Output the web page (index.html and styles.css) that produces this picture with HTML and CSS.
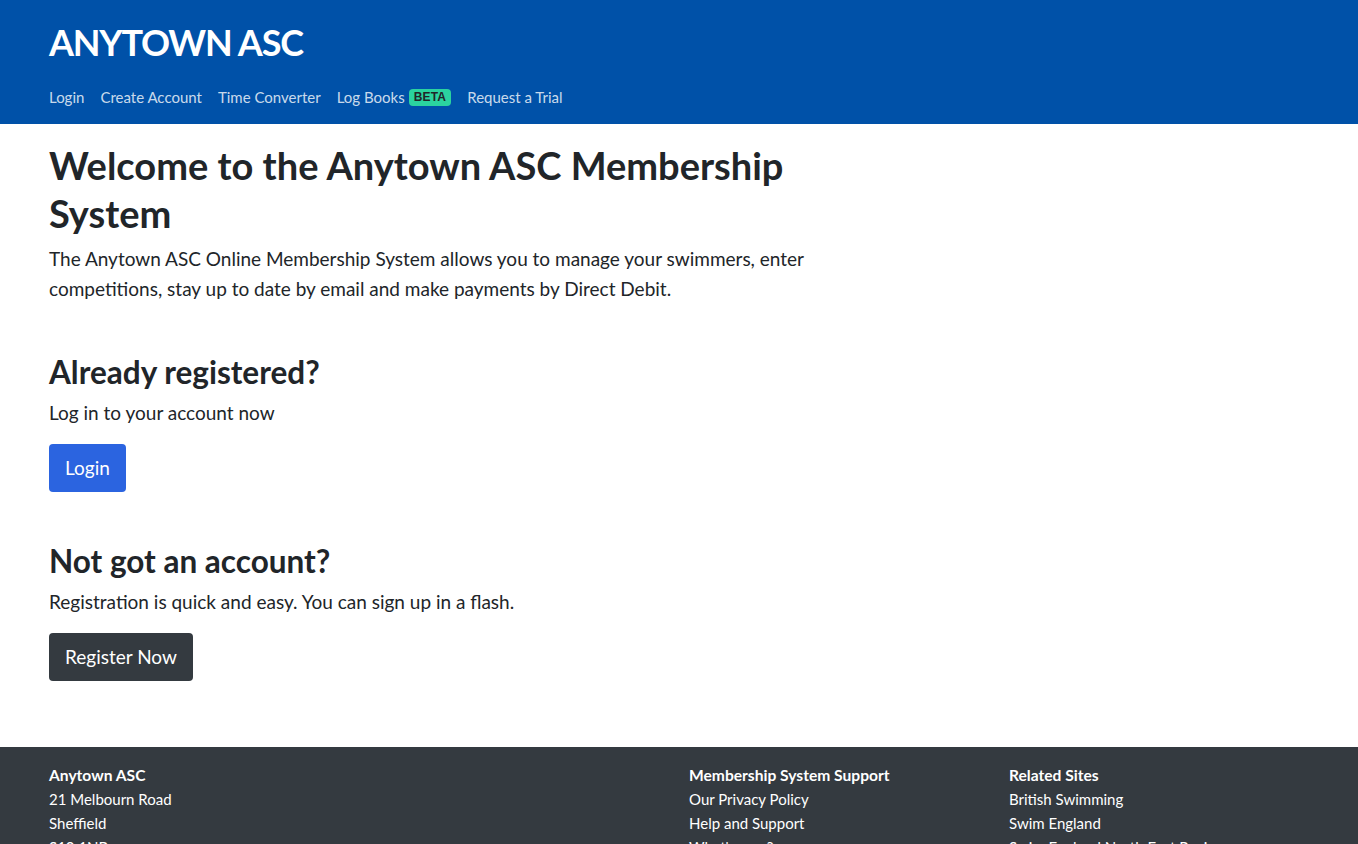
FILE: index.html
```
<!DOCTYPE html>
<html lang="en">
<head>
<meta charset="utf-8">
<title>Anytown ASC Membership</title>
<link rel="stylesheet" href="styles.css">
</head>
<body>
<header class="site-header">
  <div class="container">
    <div class="brand">ANYTOWN ASC</div>
    <nav class="nav">
      <a href="#">Login</a>
      <a href="#">Create Account</a>
      <a href="#">Time Converter</a>
      <a href="#">Log Books <span class="badge">BETA</span></a>
      <a href="#">Request a Trial</a>
    </nav>
  </div>
</header>
<main class="container main">
  <div class="intro">
    <h1>Welcome to the Anytown ASC Membership System</h1>
    <p class="lead">The Anytown ASC Online Membership System allows you to manage your swimmers, enter competitions, stay up to date by email and make payments by Direct Debit.</p>
  </div>
  <section class="block">
    <h2>Already registered?</h2>
    <p class="lead">Log in to your account now</p>
    <a class="btn btn-primary" href="#">Login</a>
  </section>
  <section class="block block-2">
    <h2>Not got an account?</h2>
    <p class="lead">Registration is quick and easy. You can sign up in a flash.</p>
    <a class="btn btn-dark" href="#">Register Now</a>
  </section>
</main>
<footer class="site-footer">
  <div class="container footer-grid">
    <div class="fcol">
      <div class="fhead">Anytown ASC</div>
      <div>21 Melbourn Road</div>
      <div>Sheffield</div>
      <div>S10 1NB</div>
    </div>
    <div class="fcol"></div>
    <div class="fcol">
      <div class="fhead">Membership System Support</div>
      <a href="#">Our Privacy Policy</a>
      <a href="#">Help and Support</a>
      <a href="#">What's new?</a>
    </div>
    <div class="fcol">
      <div class="fhead">Related Sites</div>
      <a href="#">British Swimming</a>
      <a href="#">Swim England</a>
      <a href="#">Swim England North East Region</a>
    </div>
  </div>
</footer>
</body>
</html>
```
FILE: styles.css
```
* { box-sizing: border-box; }
html, body { margin: 0; padding: 0; }
body {
  font-family: Lato, "Noto Sans", sans-serif;
  color: #212529;
  background: #fff;
  font-size: 16px;
  line-height: 1.5;
}
a { text-decoration: none; }
.container {
  padding-left: 49px;
  padding-right: 49px;
}
.site-header {
  background: #0051a8;
  padding-top: 18px;
  padding-bottom: 7px;
}
.brand {
  color: #fff;
  font-weight: 700;
  font-size: 36px;
  letter-spacing: -1.2px;
  line-height: 48px;
}
.nav {
  display: flex;
  gap: 16px;
  margin-top: 11px;
  padding: 8px 0;
}
.nav a {
  color: rgba(255,255,255,0.8);
  font-size: 15px;
  line-height: 24px;
  display: flex;
  align-items: center;
  gap: 4px;
}
.badge {
  background: #2bd39f;
  color: #212529;
  font-family: "Liberation Sans", Arial, sans-serif;
  font-weight: 700;
  font-size: 12px;
  line-height: 17px;
  padding: 0 5px;
  border-radius: 4px;
  letter-spacing: 0.2px;
}
.main { padding-top: 17px; padding-bottom: 66px; }
.intro { max-width: 860px; }
h1 {
  font-size: 38px;
  line-height: 48px;
  font-weight: 700;
  margin: 0 0 7px;
}
h2 {
  font-size: 31.5px;
  line-height: 38px;
  font-weight: 700;
  margin: 0 0 7px;
}
.lead {
  font-size: 19px;
  line-height: 30px;
  margin: 0 0 16px;
}
.intro .lead { margin-bottom: 0; }
.block { margin-top: 49px; }
.block-2 { margin-top: 50px; }
.btn {
  display: inline-block;
  font-size: 19px;
  line-height: 30px;
  padding: 9px 16px;
  border-radius: 4px;
  color: #fff;
}
.btn-primary { background: #2b64e0; }
.btn-dark { background: #343a40; }
.site-footer {
  background: #343a40;
  color: #fff;
  padding-top: 16px;
  padding-bottom: 24px;
}
.footer-grid {
  display: grid;
  grid-template-columns: repeat(4, 1fr);
  column-gap: 20px;
}
.fcol {
  display: flex;
  flex-direction: column;
  font-size: 15px;
  line-height: 24px;
}
.fcol a { color: #fff; }
.fhead { font-weight: 700; font-size: 15.6px; }
```
